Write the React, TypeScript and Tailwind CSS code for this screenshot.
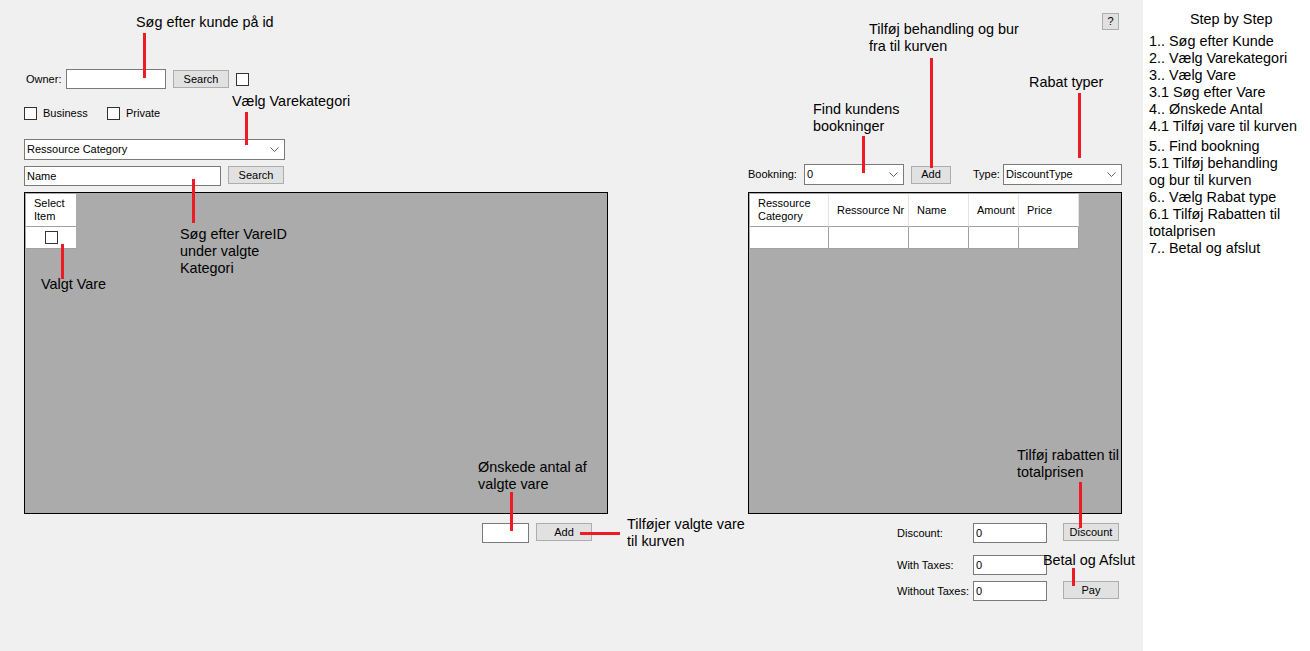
import React from "react";

const Chevron = () => (
  <svg width="9" height="5" viewBox="0 0 9 5" className="shrink-0">
    <path d="M0.5 0.5 L4.5 4.5 L8.5 0.5" fill="none" stroke="#606060" strokeWidth="1" />
  </svg>
);

const TextBox = ({ w, value }: { w: string; value?: string }) => (
  <div className={`${w} h-[20px] bg-white border border-[#7a7a7a] flex items-center pl-[2px] text-[11px] text-black shrink-0`}>
    {value}
  </div>
);

const Btn = ({ w, label }: { w: string; label: string }) => (
  <div className={`${w} h-[18px] bg-[#e1e1e1] border border-[#adadad] flex items-center justify-center text-[11px] text-black shrink-0`}>
    {label}
  </div>
);

const Check = () => <div className="w-[13px] h-[13px] bg-white border border-[#333333] shrink-0" />;

const Combo = ({ w, value }: { w: string; value: string }) => (
  <div className={`${w} h-[21px] bg-white border border-[#7a7a7a] flex items-center justify-between pl-[2px] pr-[5px] text-[11px] text-black shrink-0`}>
    <span>{value}</span>
    <Chevron />
  </div>
);

const Note = ({ x, y, lines }: { x: number; y: number; lines: string[] }) => (
  <div
    className="absolute text-[14.4px] leading-[17px] text-black whitespace-nowrap"
    style={{ left: x, top: y }}
  >
    {lines.map((l) => (
      <div key={l}>{l}</div>
    ))}
  </div>
);

const VLine = ({ x, y1, y2 }: { x: number; y1: number; y2: number }) => (
  <div className="absolute w-[3px] bg-[#ed1c24]" style={{ left: x, top: y1, height: y2 - y1 }} />
);

export default function App() {
  const steps: { t: string; extra?: boolean }[] = [
    { t: "1.. Søg efter Kunde" },
    { t: "2.. Vælg Varekategori" },
    { t: "3.. Vælg Vare" },
    { t: "3.1 Søg efter Vare" },
    { t: "4.. Ønskede Antal" },
    { t: "4.1 Tilføj vare til kurven" },
    { t: "5.. Find bookning", extra: true },
    { t: "5.1 Tilføj behandling" },
    { t: "og bur til kurven" },
    { t: "6.. Vælg Rabat type" },
    { t: "6.1 Tilføj Rabatten til" },
    { t: "totalprisen" },
    { t: "7.. Betal og afslut" },
  ];

  const rightCols = [
    { w: "w-[79px]", h: ["Ressource", "Category"] },
    { w: "w-[80px]", h: ["Ressource Nr"] },
    { w: "w-[60px]", h: ["Name"] },
    { w: "w-[50px]", h: ["Amount"] },
    { w: "w-[60px]", h: ["Price"] },
  ];

  return (
    <div className="w-[1310px] h-[651px] flex font-['Liberation_Sans',Arial,sans-serif] overflow-hidden">
      {/* Form area */}
      <div className="relative w-[1143px] h-[651px] bg-[#f0f0f0] flex shrink-0">
        {/* Left column */}
        <div className="ml-[24px] w-[584px] flex flex-col">
          <div className="mt-[69px] h-[20px] flex items-center">
            <span className="ml-[2px] w-[40px] text-[11px] text-black">Owner:</span>
            <TextBox w="w-[100px]" />
            <div className="ml-[7px]">
              <Btn w="w-[56px]" label="Search" />
            </div>
            <div className="ml-[7px]">
              <Check />
            </div>
          </div>

          <div className="mt-[18px] h-[13px] flex items-center">
            <div className="w-[83px] flex items-center">
              <Check />
              <span className="ml-[6px] text-[11px] text-black">Business</span>
            </div>
            <Check />
            <span className="ml-[6px] text-[11px] text-black">Private</span>
          </div>

          <div className="mt-[19px]">
            <Combo w="w-[261px]" value="Ressource Category" />
          </div>

          <div className="mt-[6px] flex items-start">
            <TextBox w="w-[197px]" value="Name" />
            <div className="ml-[7px]">
              <Btn w="w-[56px]" label="Search" />
            </div>
          </div>

          <div className="mt-[6px] w-[584px] h-[322px] border border-black bg-[#ababab] p-[1px]">
            <div className="w-[50px] flex flex-col">
              <div className="h-[33px] bg-white border-b border-[#a0a0a0] flex items-center pl-[8px] text-[11px] leading-[13px] text-black">
                <div>
                  <div>Select</div>
                  <div>Item</div>
                </div>
              </div>
              <div className="h-[22px] bg-white border-b border-[#a0a0a0] flex items-center justify-center">
                <div className="-mt-[1px]">
                  <Check />
                </div>
              </div>
            </div>
          </div>

          <div className="mt-[9px] flex items-start">
            <div className="ml-[458px]">
              <TextBox w="w-[47px]" />
            </div>
            <div className="ml-[7px]">
              <Btn w="w-[56px]" label="Add" />
            </div>
          </div>
        </div>

        {/* Right column */}
        <div className="ml-[140px] w-[374px] flex flex-col">
          <div className="mt-[13px] self-end mr-[3px] w-[17px] h-[17px] bg-[#e1e1e1] border border-[#adadad] flex items-center justify-center text-[11px] text-black">
            ?
          </div>

          <div className="mt-[134px] h-[21px] flex items-center">
            <span className="w-[56px] text-[11px] text-black">Bookning:</span>
            <Combo w="w-[100px]" value="0" />
            <div className="ml-[7px]">
              <Btn w="w-[40px]" label="Add" />
            </div>
            <span className="ml-[22px] w-[30px] text-[11px] text-black">Type:</span>
            <Combo w="w-[119px]" value="DiscountType" />
          </div>

          <div className="mt-[7px] w-[374px] h-[322px] border border-black bg-[#ababab] p-[1px]">
            <div className="flex">
              {rightCols.map((c) => (
                <div key={c.h.join()} className={`${c.w} flex flex-col`}>
                  <div className="h-[33px] bg-white border-r border-r-[#e3e3e3] border-b border-b-[#a0a0a0] flex items-center pl-[8px] text-[11px] leading-[13px] text-black">
                    <div>
                      {c.h.map((l) => (
                        <div key={l} className="whitespace-nowrap">{l}</div>
                      ))}
                    </div>
                  </div>
                  <div className="h-[22px] bg-white border-r border-b border-[#a0a0a0]" />
                </div>
              ))}
            </div>
          </div>

          <div className="mt-[9px] flex items-center">
            <span className="ml-[149px] w-[76px] text-[11px] text-black">Discount:</span>
            <TextBox w="w-[74px]" value="0" />
            <div className="ml-[16px] self-start">
              <Btn w="w-[56px]" label="Discount" />
            </div>
          </div>

          <div className="mt-[12px] flex items-center">
            <span className="ml-[149px] w-[76px] text-[11px] text-black">With Taxes:</span>
            <TextBox w="w-[74px]" value="0" />
          </div>

          <div className="mt-[6px] flex items-center">
            <span className="ml-[149px] w-[76px] text-[11px] text-black whitespace-nowrap">Without Taxes:</span>
            <TextBox w="w-[74px]" value="0" />
            <div className="ml-[16px] self-start">
              <Btn w="w-[56px]" label="Pay" />
            </div>
          </div>
        </div>

        {/* Annotations */}
        <Note x={136} y={14} lines={["Søg efter kunde på id"]} />
        <VLine x={143} y1={33} y2={78} />
        <Note x={232} y={93} lines={["Vælg Varekategori"]} />
        <VLine x={245} y1={112} y2={145} />
        <Note x={180} y={226} lines={["Søg efter VareID", "under valgte", "Kategori"]} />
        <VLine x={192} y1={179} y2={223} />
        <Note x={41} y={276} lines={["Valgt Vare"]} />
        <VLine x={61} y1={244} y2={279} />
        <Note x={478} y={459} lines={["Ønskede antal af", "valgte vare"]} />
        <VLine x={510} y1={492} y2={531} />
        <div className="absolute left-[580px] top-[532px] w-[40px] h-[3px] bg-[#ed1c24]" />
        <Note x={627} y={516} lines={["Tilføjer valgte vare", "til kurven"]} />
        <Note x={869} y={21} lines={["Tilføj behandling og bur", "fra til kurven"]} />
        <VLine x={930} y1={58} y2={168} />
        <Note x={1029} y={74} lines={["Rabat typer"]} />
        <VLine x={1078} y1={93} y2={158} />
        <Note x={813} y={101} lines={["Find kundens", "bookninger"]} />
        <VLine x={862} y1={136} y2={173} />
        <Note x={1017} y={447} lines={["Tilføj rabatten til", "totalprisen"]} />
        <VLine x={1079} y1={482} y2={528} />
        <Note x={1043} y={552} lines={["Betal og Afslut"]} />
        <VLine x={1072} y1={568} y2={586} />
      </div>

      {/* Step by step panel */}
      <div className="flex-1 bg-white flex flex-col text-[14.4px] leading-[17px] text-black">
        <div className="mt-[11px] ml-[47px] whitespace-nowrap">Step by Step</div>
        <div className="mt-[5px] ml-[6px] flex flex-col">
          {steps.map((s) => (
            <div key={s.t} className={`whitespace-nowrap ${s.extra ? "mt-[3px]" : ""}`}>
              {s.t}
            </div>
          ))}
        </div>
      </div>
    </div>
  );
}
